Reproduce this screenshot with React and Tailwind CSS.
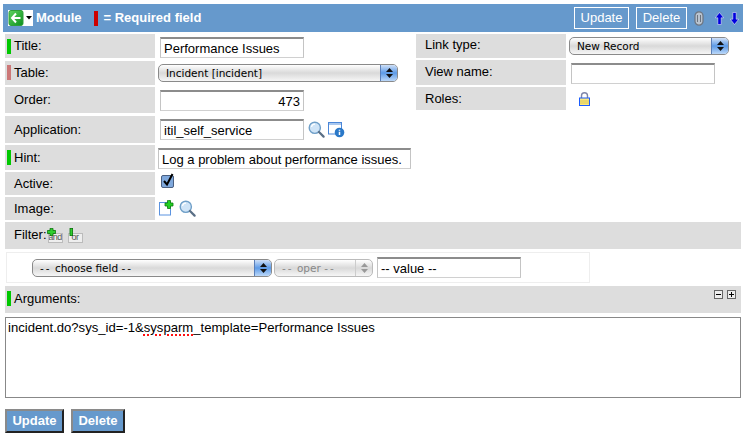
const SANS = "font-['Liberation_Sans',Arial,sans-serif]";

function BackIcon() {
  return (
    <div className="flex items-center w-[25px] h-[16px] bg-white">
      <svg width="17" height="16" viewBox="0 0 17 16">
        <defs>
          <linearGradient id="backGreen" x1="0" y1="0" x2="1" y2="1">
            <stop offset="0" stopColor="#5fd35f" />
            <stop offset="1" stopColor="#0b8f1c" />
          </linearGradient>
        </defs>
        <rect x="1" y="0.5" width="14" height="15" rx="2" fill="url(#backGreen)" stroke="#2f9e3a" />
        <path d="M8 3.5 L4 8 L8 12.5 M4.5 8 H12.5" fill="none" stroke="#fff" strokeWidth="2" />
      </svg>
      <svg width="8" height="16" viewBox="0 0 8 16">
        <path d="M1 6 H7 L4 9.5 Z" fill="#000" />
      </svg>
    </div>
  );
}

function Magnifier() {
  return (
    <svg width="17" height="17" viewBox="0 0 17 17">
      <circle cx="6.8" cy="6.8" r="5.6" fill="#cfe4f7" stroke="#6f9fc8" strokeWidth="1.4" />
      <path d="M3.5 6 A3.5 3.5 0 0 1 7 3.2" fill="none" stroke="#fff" strokeWidth="1.2" />
      <path d="M11 11 L15.6 15.6" stroke="#5a6f86" strokeWidth="2.2" strokeLinecap="round" />
    </svg>
  );
}

function InfoWindow() {
  return (
    <svg width="17" height="17" viewBox="0 0 17 17">
      <rect x="0.5" y="1.5" width="13" height="11.5" fill="#fff" stroke="#4a86d8" />
      <rect x="1" y="2" width="12" height="2" fill="#a9c8ef" />
      <circle cx="11.5" cy="11.5" r="4.8" fill="#2a78c8" />
      <path d="M11.5 8.8 V9.8 M11.5 10.8 V14" stroke="#fff" strokeWidth="1.5" />
    </svg>
  );
}

function NewDoc() {
  return (
    <svg width="15" height="16" viewBox="0 0 15 16">
      <rect x="0.5" y="2.5" width="11" height="12.5" fill="#fff" stroke="#5b93e0" />
      <path d="M9.5 0.5 H11.5 V3 H14 V6 H11.5 V8.5 H8.5 V6 H6 V3 H8.5 V0.5 Z" fill="#22d022" stroke="#0a7a0a" strokeWidth="0.8" />
    </svg>
  );
}

function FilterIcon({ label, plus }) {
  return (
    <div className="relative w-[15px] h-[15px] mt-[3px]">
      <div className="absolute left-0 bottom-0 w-[15px] h-[10px] bg-[#eeeeee] border border-[#bbbbbb] flex items-end justify-center overflow-hidden text-[9px] leading-[9px] tracking-[-0.5px] text-[#555555]">
        {label}
      </div>
      <svg className="absolute left-[-1px] top-0" width="9" height="8" viewBox="0 0 9 8">
        {plus ? (
          <path d="M3 0.4 H6 V2.5 H8.6 V5.5 H6 V7.6 H3 V5.5 H0.4 V2.5 H3 Z" fill="#2fce2f" stroke="#087008" strokeWidth="0.8" />
        ) : (
          <rect x="3" y="0.4" width="2.6" height="7.2" fill="#2fce2f" stroke="#087008" strokeWidth="0.8" />
        )}
      </svg>
    </div>
  );
}

function Lock() {
  return (
    <svg width="11" height="14" viewBox="0 0 11 14">
      <path d="M2.5 6 V3.8 A3 3 0 0 1 8.5 3.8 V6" fill="none" stroke="#7f86a8" strokeWidth="1.4" />
      <rect x="0.5" y="6" width="10" height="7.5" fill="#fbe97e" stroke="#1a5cff" />
      <path d="M1 9 H10 M1 11 H10" stroke="#d8c558" />
    </svg>
  );
}

function Clip() {
  return (
    <svg width="10" height="15" viewBox="0 0 10 15">
      <rect x="1" y="0.8" width="8" height="13.4" rx="4" fill="#b9c3cf" stroke="#6b7480" strokeWidth="1.2" />
      <path d="M3.5 4 V11 M6.5 4 V11" stroke="#6b7480" strokeWidth="1" />
    </svg>
  );
}

function Arrow({ up }) {
  return (
    <svg width="9" height="13" viewBox="0 0 9 13">
      <path
        d={up ? "M4.5 0.5 L8.7 5.8 H6.2 V12.5 H2.8 V5.8 H0.3 Z" : "M4.5 12.5 L8.7 7.2 H6.2 V0.5 H2.8 V7.2 H0.3 Z"}
        fill="#0000dd"
        stroke="#fff"
        strokeWidth="0.5"
      />
    </svg>
  );
}

function Select({ label, className, disabled }) {
  return (
    <div className={`flex h-[18px] rounded-[5px] border border-[#8a8a8a] overflow-hidden bg-gradient-to-b from-[#fff] via-[#d9d9d9] to-[#f6f6f6] font-['DejaVu_Sans',sans-serif] text-[10.5px] leading-[16px] ${className} ${disabled ? "text-[#888] border-[#bbb]" : "text-black"}`}>
      <span className="flex-1 pl-[7px] truncate">{label}</span>
      <span className={`flex flex-col items-center justify-center gap-[2px] w-[17px] border-l ${disabled ? "border-[#ccc]" : "border-[#5b7fb8] bg-gradient-to-b from-[#cfe0f7] via-[#5c9ae6] to-[#bcd8f8]"}`}>
        <svg width="7" height="4" viewBox="0 0 7 4"><path d="M3.5 0 L7 4 H0 Z" fill={disabled ? "#999" : "#111"} /></svg>
        <svg width="7" height="4" viewBox="0 0 7 4"><path d="M3.5 4 L7 0 H0 Z" fill={disabled ? "#999" : "#111"} /></svg>
      </span>
    </div>
  );
}

function Dashes() {
  return <span className="tracking-[2px]">--</span>;
}

function TextInput({ value, className }) {
  return (
    <input
      readOnly
      value={value}
      className={`border border-t-2 border-l-[#c4c4c4] border-r-[#c4c4c4] border-b-[#d0d0d0] border-t-[#8c8c8c] bg-white px-[3px] text-[13px] text-black outline-none ${SANS} ${className}`}
    />
  );
}

function Label({ text, mark, className }) {
  return (
    <div className={`relative flex items-center w-[150px] shrink-0 bg-[#dddddd] pl-[9px] text-[13px] text-black ${className}`}>
      {mark === "green" && <span className="absolute left-[2px] top-[5px] w-[4px] h-[15px] bg-[#00c800]" />}
      {mark === "red" && <span className="absolute left-[2px] top-[4px] w-[4px] h-[15px] bg-[#cc7777]" />}
      {text}
    </div>
  );
}

export default function App() {
  return (
    <div className={`w-[751px] h-[439px] bg-white overflow-hidden pt-[4px] ${SANS}`}>
      {/* Header */}
      <div className="flex items-center justify-between mx-[3px] w-[740px] h-[28px] bg-[#6699cc] pl-[5px] pr-[4px] text-white">
        <div className="flex items-center">
          <BackIcon />
          <span className="ml-[3px] text-[13px] font-bold">Module</span>
          <span className="ml-[12px] w-[4px] h-[15px] bg-[#cc0000]" />
          <span className="ml-[6px] text-[13px] font-bold">= Required field</span>
        </div>
        <div className="flex items-center">
          <button className="w-[55px] h-[22px] border border-white text-[13px] text-white">Update</button>
          <button className="ml-[7px] w-[51px] h-[22px] border border-white text-[13px] text-white">Delete</button>
          <span className="ml-[7px] flex"><Clip /></span>
          <span className="ml-[11px] flex"><Arrow up /></span>
          <span className="ml-[6px] flex"><Arrow /></span>
        </div>
      </div>

      {/* Fields */}
      <div className="flex mt-[2px] ml-[5px]">
        <div className="w-[411px] shrink-0">
          <div className="flex h-[24px]">
            <Label text="Title:" mark="green" />
            <TextInput value="Performance Issues" className="ml-[5px] mt-[3px] w-[144px] h-[21px]" />
          </div>
          <div className="flex h-[24px] mt-[3px]">
            <Label text="Table:" mark="red" />
            <Select label="Incident [incident]" className="ml-[3px] mt-[3px] w-[240px]" />
          </div>
          <div className="flex h-[26px] mt-[2px]">
            <Label text="Order:" />
            <TextInput value="473" className="ml-[5px] mt-[3px] w-[144px] h-[21px] text-right" />
          </div>
          <div className="flex h-[27px] mt-[3px]">
            <Label text="Application:" />
            <TextInput value="itil_self_service" className="ml-[5px] mt-[3px] w-[144px] h-[21px]" />
            <span className="ml-[4px] mt-[5px]"><Magnifier /></span>
            <span className="ml-[3px] mt-[5px]"><InfoWindow /></span>
          </div>
          <div className="flex h-[25px] mt-[2px]">
            <Label text="Hint:" mark="green" />
            <TextInput value="Log a problem about performance issues." className="ml-[3px] mt-[3px] w-[253px] h-[21px]" />
          </div>
          <div className="flex h-[23px] mt-[2px]">
            <Label text="Active:" />
            <svg className="ml-[6px] mt-[1px]" width="13" height="15" viewBox="0 0 13 15">
              <rect x="0.5" y="2.5" width="12" height="12" rx="1.5" fill="#7fa8dc" stroke="#4a5f80" />
              <path d="M3 8 L6 11.5 L11.5 1" fill="none" stroke="#000" strokeWidth="2" />
            </svg>
          </div>
          <div className="flex h-[23px] mt-[2px]">
            <Label text="Image:" />
            <span className="ml-[4px] mt-[3px]"><NewDoc /></span>
            <span className="ml-[5px] mt-[3px]"><Magnifier /></span>
          </div>
        </div>

        <div className="w-[327px]">
          <div className="flex h-[24px]">
            <Label text="Link type:" className="pb-[2px]" />
            <Select label="New Record" className="ml-[3px] mt-[3px] w-[160px]" />
          </div>
          <div className="flex h-[25px] mt-[2px]">
            <Label text="View name:" className="pb-[1px]" />
            <TextInput value="" className="ml-[5px] mt-[3px] w-[144px] h-[21px]" />
          </div>
          <div className="flex h-[23px] mt-[2px]">
            <Label text="Roles:" />
            <span className="ml-[13px] mt-[5px]"><Lock /></span>
          </div>
        </div>
      </div>

      {/* Filter */}
      <div className="flex items-start mt-[2px] ml-[5px] w-[736px] h-[27px] bg-[#dddddd] pl-[9px] pt-[3px] text-[13px]">
        <span>Filter:</span>
        <span className="ml-[1px]"><FilterIcon label="and" plus /></span>
        <span className="ml-[5px]"><FilterIcon label="or" /></span>
      </div>
      <div className="flex items-center mt-[3px] ml-[6px] w-[584px] h-[31px] border border-[#eeeeee] pl-[25px]">
        <Select label={<><Dashes /> choose field <Dashes /></>} className="w-[240px]" />
        <Select label={<><Dashes /> oper <Dashes /></>} disabled className="ml-[2px] w-[99px]" />
        <TextInput value="-- value --" className="ml-[4px] w-[144px] h-[21px] text-[#444]" />
      </div>

      {/* Arguments */}
      <div className="relative mt-[3px] ml-[5px] w-[736px] h-[27px] bg-[#dddddd] pl-[9px] pt-[3px] text-[13px]">
        <span className="absolute left-[2px] top-[5px] w-[4px] h-[15px] bg-[#00c800]" />
        Arguments:
        <span className="absolute left-[709px] top-[4px] flex gap-[4px]">
          <svg width="9" height="9" viewBox="0 0 9 9"><rect x="0.5" y="0.5" width="8" height="8" fill="#eee" stroke="#666" /><path d="M2 4.5 H7" stroke="#000" /></svg>
          <svg width="9" height="9" viewBox="0 0 9 9"><rect x="0.5" y="0.5" width="8" height="8" fill="#eee" stroke="#666" /><path d="M2 4.5 H7 M4.5 2 V7" stroke="#000" /></svg>
        </span>
      </div>
      <div className="mt-[4px] ml-[5px] w-[736px] h-[81px] border border-[#888888] px-[2px] pt-[2px] text-[13.1px] leading-[16px]">
        incident.do?sys_id=-1&amp;<span className="underline decoration-dotted decoration-[#ff1010] decoration-[1.5px] underline-offset-2">sysparm</span>_template=Performance Issues
      </div>

      {/* Bottom buttons */}
      <div className="flex mt-[11px] ml-[5px] gap-[7px]">
        <button className="w-[59px] h-[24px] border-2 border-t-[#8a8a8a] border-l-[#8a8a8a] border-r-[#222] border-b-[#222] bg-[#6699cc] text-[13px] font-bold text-white">Update</button>
        <button className="w-[54px] h-[24px] border-2 border-t-[#8a8a8a] border-l-[#8a8a8a] border-r-[#222] border-b-[#222] bg-[#6699cc] text-[13px] font-bold text-white">Delete</button>
      </div>
    </div>
  );
}
